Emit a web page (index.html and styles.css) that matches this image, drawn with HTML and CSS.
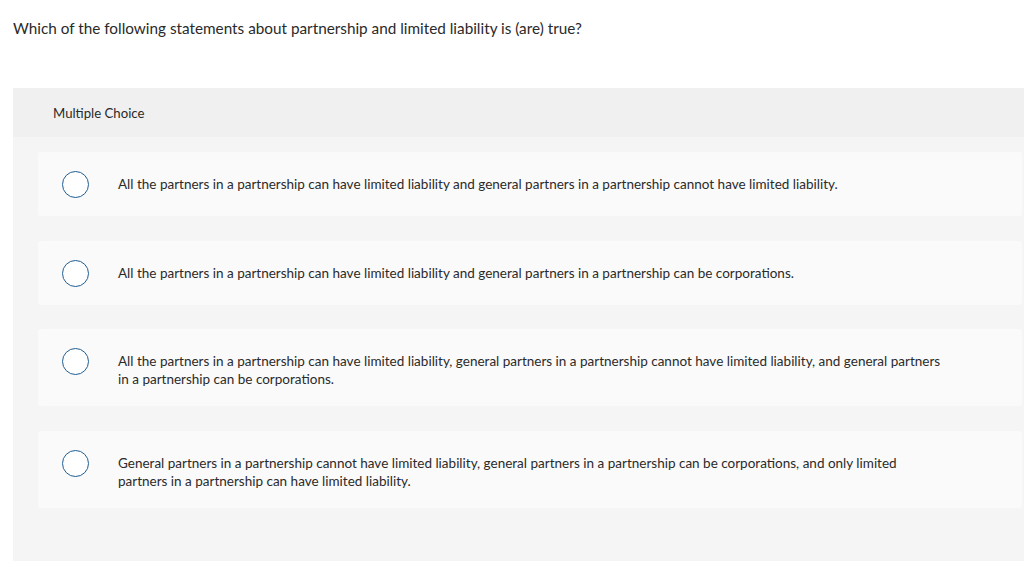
FILE: index.html
```html
<!DOCTYPE html>
<html lang="en">
<head>
<meta charset="utf-8">
<title>Multiple Choice</title>
<link rel="stylesheet" href="styles.css">
</head>
<body>
<main class="page">
  <p class="question">Which of the following statements about partnership and limited liability is (are) true?</p>
  <section class="mc">
    <header class="mc-head">Multiple Choice</header>
    <div class="mc-body">
      <label class="option"><span class="radio"></span><span class="opt-text">All the partners in a partnership can have limited liability and general partners in a partnership cannot have limited liability.</span></label>
      <label class="option"><span class="radio"></span><span class="opt-text">All the partners in a partnership can have limited liability and general partners in a partnership can be corporations.</span></label>
      <label class="option"><span class="radio"></span><span class="opt-text">All the partners in a partnership can have limited liability, general partners in a partnership cannot have limited liability, and general partners in a partnership can be corporations.</span></label>
      <label class="option"><span class="radio"></span><span class="opt-text">General partners in a partnership cannot have limited liability, general partners in a partnership can be corporations, and only limited partners in a partnership can have limited liability.</span></label>
    </div>
  </section>
</main>
</body>
</html>
```

FILE: styles.css
```css
html, body {
  margin: 0;
  padding: 0;
  background: #ffffff;
  overflow: hidden;
}
body {
  font-family: "Lato", "Open Sans", sans-serif;
  color: #2a2a2a;
}
.page {
  padding-left: 13px;
}
.question {
  margin: 0;
  padding-top: 18px;
  height: 88px;
  box-sizing: border-box;
  font-size: 15.3px;
  line-height: 20px;
}
.mc {
  background: #f5f5f5;
}
.mc-head {
  background: #f0f0f0;
  height: 49px;
  padding-left: 40px;
  display: flex;
  align-items: center;
  font-size: 13.2px;
}
.mc-body {
  padding: 15px 2px 53px 25px;
  display: flex;
  flex-direction: column;
  gap: 24.7px;
}
.option {
  background: #fafafa;
  border-radius: 3px;
  display: flex;
  align-items: flex-start;
  padding: 19px 20px 18px 24px;
}
.radio {
  flex: none;
  width: 27px;
  height: 27px;
  box-sizing: border-box;
  border: 1.5px solid #1e5d93;
  border-radius: 50%;
  background: #ffffff;
}
.opt-text {
  margin-left: 29px;
  margin-top: 4px;
  font-size: 13.5px;
  line-height: 18px;
  max-width: 830px;
}
```
